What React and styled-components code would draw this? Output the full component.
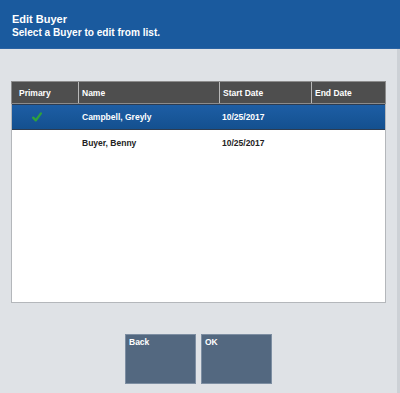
import React from 'react';
import styled, { createGlobalStyle } from 'styled-components';

const GlobalStyle = createGlobalStyle`
  html, body {
    margin: 0;
    padding: 0;
    background: #dfe2e6;
  }
  * {
    box-sizing: border-box;
  }
`;

const Screen = styled.div`
  width: 400px;
  height: 393px;
  display: flex;
  flex-direction: column;
  font-family: "Liberation Sans", Arial, sans-serif;
  background: #dfe2e6;
  overflow: hidden;
`;

const TitleBar = styled.header`
  height: 49px;
  background: #1a5a9e;
  color: #ffffff;
  padding: 13px 12px 0;
  font-weight: 700;
  border-bottom: 1px solid #2b63a3;
`;

const Title = styled.div`
  font-size: 11px;
  line-height: 13px;
`;

const Subtitle = styled.div`
  font-size: 10.1px;
  line-height: 13px;
`;

const Body = styled.main`
  flex: 1;
  display: flex;
  flex-direction: column;
  align-items: flex-start;
  padding: 32px 0 0 11px;
  border-right: 3px solid #cdd1d6;
`;

const Table = styled.div`
  width: 375px;
  height: 222px;
  background: #ffffff;
  border: 1px solid #b4b7bb;
  border-top: none;
  display: flex;
  flex-direction: column;
`;

const cols = '66px 141px 92px 1fr';

const HeadRow = styled.div`
  display: grid;
  grid-template-columns: ${cols};
  height: 23px;
  background: #4e4e4e;
  border: 1px solid #8c8c8c;
  margin: 0 -1px;
`;

const HeadCell = styled.div`
  display: flex;
  align-items: center;
  padding-left: ${p => p.$pad || 3}px;
  color: #ffffff;
  font-size: 8.5px;
  font-weight: 700;
  border-left: ${p => (p.$first ? 'none' : '1px solid #b9b9b9')};
`;

const Row = styled.div`
  display: grid;
  grid-template-columns: ${cols};
  height: 26px;
  color: ${p => (p.$selected ? '#ffffff' : '#222222')};
  background: ${p =>
    p.$selected ? 'linear-gradient(#1d5ea5, #14508f)' : 'transparent'};
  border-top: 1px solid ${p => (p.$selected ? '#2c3c52' : 'transparent')};
  border-bottom: 1px solid ${p => (p.$selected ? '#2c3c52' : 'transparent')};
`;

const Cell = styled.div`
  display: flex;
  align-items: center;
  padding-left: ${p => p.$pad || 4}px;
  font-size: 8.5px;
  font-weight: 700;
`;

const Buttons = styled.div`
  align-self: stretch;
  display: flex;
  justify-content: center;
  gap: 5px;
  margin: 31px 0 0 -11px;
`;

const Button = styled.button`
  width: 71px;
  height: 50px;
  background: #536880;
  border: 1px solid #7d8ea2;
  color: #ffffff;
  font-family: inherit;
  font-size: 8.5px;
  font-weight: 700;
  text-align: left;
  display: flex;
  align-items: flex-start;
  padding: 2px 3px;
  cursor: pointer;
`;

const Check = () => (
  <svg width="10" height="10" viewBox="0 0 10 10">
    <path
      d="M1.2 5.6 L3.8 8.4 L8.9 1.4"
      fill="none"
      stroke="#2fa23c"
      strokeWidth="2.3"
      strokeLinecap="round"
      strokeLinejoin="round"
    />
  </svg>
);

const buyers = [
  { name: 'Campbell, Greyly', start: '10/25/2017', end: '', primary: true },
  { name: 'Buyer, Benny', start: '10/25/2017', end: '', primary: false },
];

export default function App() {
  return (
    <>
      <GlobalStyle />
      <Screen>
        <TitleBar>
          <Title>Edit Buyer</Title>
          <Subtitle>Select a Buyer to edit from list.</Subtitle>
        </TitleBar>
        <Body>
          <Table>
            <HeadRow>
              <HeadCell $first $pad={7}>Primary</HeadCell>
              <HeadCell>Name</HeadCell>
              <HeadCell>Start Date</HeadCell>
              <HeadCell>End Date</HeadCell>
            </HeadRow>
            {buyers.map((b, i) => (
              <Row key={b.name} $selected={i === 0}>
                <Cell $pad={20}>{b.primary && <Check />}</Cell>
                <Cell>{b.name}</Cell>
                <Cell $pad={3}>{b.start}</Cell>
                <Cell $pad={3}>{b.end}</Cell>
              </Row>
            ))}
          </Table>
          <Buttons>
            <Button>Back</Button>
            <Button>OK</Button>
          </Buttons>
        </Body>
      </Screen>
    </>
  );
}
